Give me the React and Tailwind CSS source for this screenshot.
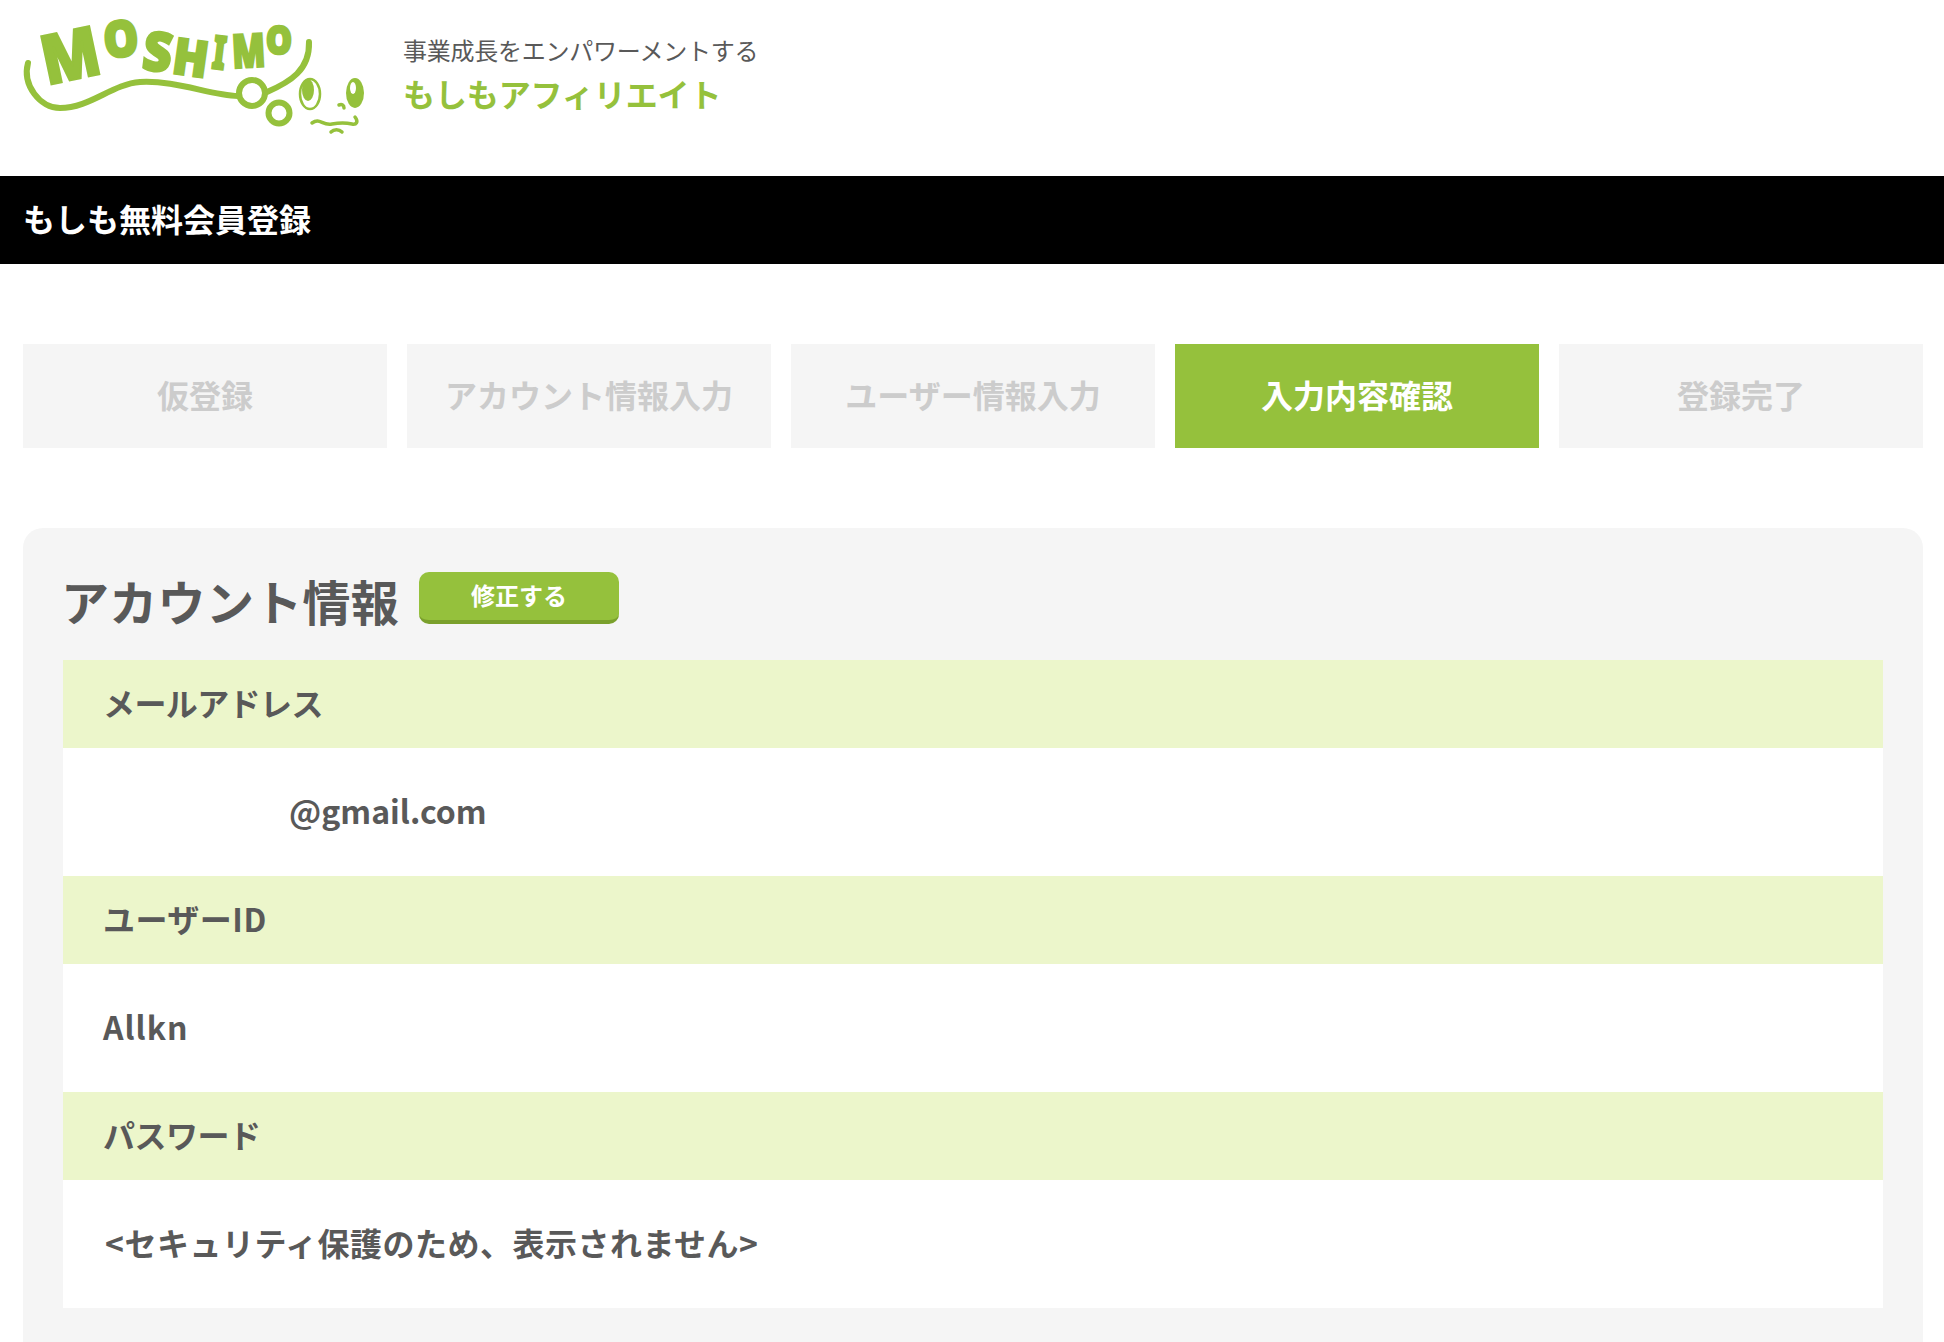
const font = "font-['Noto_Sans_CJK_JP','Noto_Sans',sans-serif]";

const steps = [
  { label: "仮登録" },
  { label: "アカウント情報入力" },
  { label: "ユーザー情報入力" },
  { label: "入力内容確認", active: true },
  { label: "登録完了" },
];

const rows = [
  { title: "メールアドレス", titleClass: "tracking-[-0.6px]", value: "@gmail.com", valueClass: "pl-[226px]" },
  { title: "ユーザーID", titleClass: "tracking-[0.5px]", value: "Allkn", valueClass: "pl-[40px] tracking-[1px]" },
  { title: "パスワード", titleClass: "tracking-[-0.5px]", value: "<セキュリティ保護のため、表示されません>", valueClass: "pl-[42px] tracking-[0.5px]" },
];

function Logo() {
  // char, x, y, size, rotation, width
  const letters = [
    ["M", 47, 85, 68, -12, 58],
    ["O", 105, 58, 50, -5, 35],
    ["S", 141, 69, 54, 7, 29],
    ["H", 171, 73, 50, 8, 35],
    ["I", 211, 68, 46, 7, 13],
    ["M", 233, 68, 46, -3, 33],
    ["O", 266, 54, 38, 0, 26],
  ];
  return (
    <svg width="400" height="150" viewBox="0 0 400 150" className="shrink-0 overflow-visible">
      {letters.map(([c, x, y, size, rot, w], i) => (
        <text
          key={i}
          x={x}
          y={y}
          fontSize={size}
          fontWeight="900"
          fill="#95c13c"
          stroke="#95c13c"
          strokeWidth="2.5"
          textLength={w}
          lengthAdjust="spacingAndGlyphs"
          fontFamily="'Noto Sans', sans-serif"
          transform={`rotate(${rot} ${x} ${y})`}
        >
          {c}
        </text>
      ))}
      <path d="M28 63C22 85 40 108 60 108C90 108 112 84 140 82C175 80 210 95 238 96" fill="none" stroke="#95c13c" strokeWidth="6" strokeLinecap="round" />
      <path d="M267 92C290 82 310 70 309 42" fill="none" stroke="#95c13c" strokeWidth="6" strokeLinecap="round" />
      <circle cx="252" cy="93" r="13" fill="none" stroke="#95c13c" strokeWidth="6" />
      <circle cx="279" cy="113" r="10.5" fill="none" stroke="#95c13c" strokeWidth="6" />
      <ellipse cx="310" cy="94" rx="10" ry="15" fill="none" stroke="#95c13c" strokeWidth="2.5" />
      <ellipse cx="308" cy="90" rx="6" ry="11" fill="#95c13c" />
      <ellipse cx="355" cy="93" rx="9" ry="15" fill="#95c13c" />
      <ellipse cx="353" cy="88" rx="3" ry="6" fill="#fff" />
      <path d="M312 123C320 117 322 126 332 124S348 123 352 124S359 122 355 117M339 105C342 104 344 105 344 108M331 132C334 129 339 129 342 132" fill="none" stroke="#95c13c" strokeWidth="3.5" strokeLinecap="round" />
    </svg>
  );
}

export default function App() {
  return (
    <div className={`${font} h-[1342px] overflow-hidden bg-white text-[#595959]`}>
      <header className="flex h-[176px] items-start">
        <Logo />
        <div className="ml-[3px] pt-[34px]">
          <p className="text-[24px] leading-[32px] tracking-[-0.25px]">事業成長をエンパワーメントする</p>
          <p className="mt-[4px] text-[32px] leading-[46px] font-bold tracking-[-0.1px] text-[#95c13c]">もしもアフィリエイト</p>
        </div>
      </header>

      <div className="flex h-[88px] items-center bg-black pb-[5px] pl-[23px] text-[32px] font-bold text-white">
        もしも無料会員登録
      </div>

      <main className="pr-[21px] pl-[23px]">
        <ol className="mt-[80px] flex gap-[20px]">
          {steps.map((step) => (
            <li
              key={step.label}
              className={`flex h-[104px] flex-1 items-center justify-center pb-[5px] text-[32px] font-bold ${
                step.active ? "bg-[#95c13c] text-white" : "bg-[#f5f5f5] text-[#cccccc]"
              }`}
            >
              {step.label}
            </li>
          ))}
        </ol>

        <section className="mt-[80px] rounded-t-[20px] bg-[#f5f5f5] px-[40px] pb-[40px]">
          <div className="flex h-[132px] items-start">
            <h2 className="mt-[37px] -ml-[2px] text-[48px] leading-[70px] font-bold tracking-[0.3px]">アカウント情報</h2>
            <button className="mt-[44px] ml-[20px] h-[52px] w-[200px] rounded-[10px] border-b-4 border-[#7aa02c] bg-[#95c13c] pb-[3px] text-[24px] font-bold text-white">
              修正する
            </button>
          </div>
          {rows.map((row) => (
            <div key={row.title}>
              <div className={`flex h-[88px] items-center bg-[#ecf6cb] pb-[5px] pl-[40px] text-[32px] font-bold ${row.titleClass}`}>
                {row.title}
              </div>
              <div className={`flex h-[128px] items-center bg-white pb-[5px] text-[32px] font-bold ${row.valueClass}`}>
                {row.value}
              </div>
            </div>
          ))}
        </section>
      </main>
    </div>
  );
}
